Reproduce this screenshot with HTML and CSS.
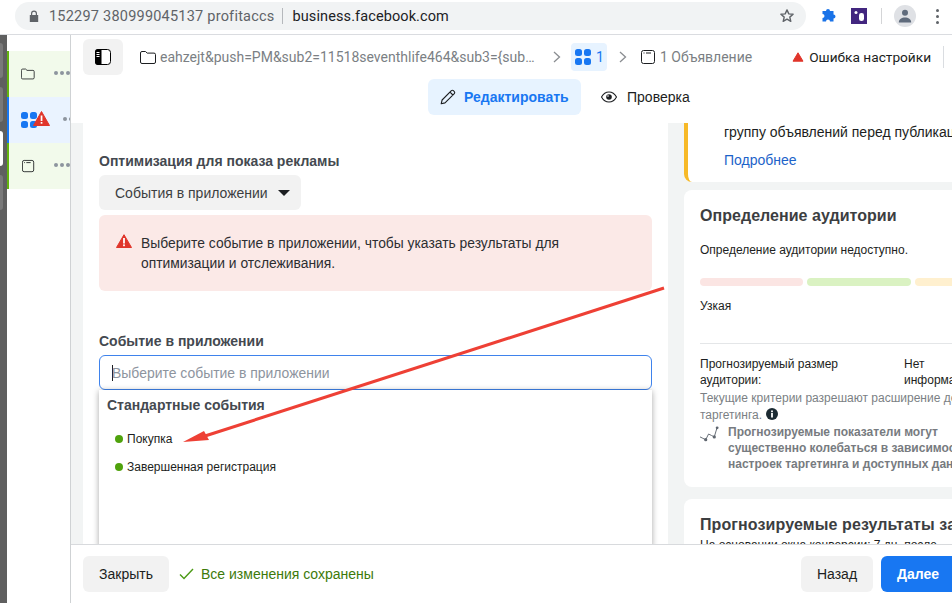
FILE: index.html
```html
<!DOCTYPE html>
<html lang="ru">
<head>
<meta charset="utf-8">
<title>Ads Manager</title>
<link rel="stylesheet" href="styles.css">
</head>
<body>
<div class="page">
  <header class="chrome">
    <div class="omnibox">
      <svg class="lock" width="10" height="12" viewBox="0 0 10 12"><path d="M2 5V3.500a3 3 0 0 1 6 0V5h1.200v7H.8V5zm1.200 0h3.600V3.500a1.800 1.800 0 0 0-3.600 0z" fill="#5f6368"/></svg>
      <span class="site-title">152297 380999045137 profitaccs</span>
      <span class="omni-sep"></span>
      <span class="site-host">business.facebook.com</span>
      <svg class="star" width="16" height="16" viewBox="0 0 16 16"><path d="M8 1.900l1.800 4 4.300.4-3.300 2.800 1 4.200L8 11.100l-3.800 2.200 1-4.200L1.900 6.300l4.300-.4z" fill="none" stroke="#5f6368" stroke-width="1.400" stroke-linejoin="round"/></svg>
    </div>
    <div class="extensions">
      <svg width="16" height="16" viewBox="0 0 16 16"><path d="M1 4.500h3.500a2 2 0 0 1 4 0H12V8a2 2 0 0 1 0 4v3H8.500a2 2 0 0 0-4 0H1v-3.500a2 2 0 0 0 0-4z" transform="translate(1.500 -1.500)" fill="#1a73e8"/></svg>
      <svg class="ext-purple" width="16" height="16" viewBox="0 0 16 16"><rect width="16" height="16" fill="#42267f"/><circle cx="5" cy="4.500" r="1.500" fill="#fff"/><rect x="8" y="5" width="5" height="8" rx="2.300" fill="#fff"/></svg>
      <span class="ext-sep"></span>
      <span class="avatar"><svg width="14" height="14" viewBox="0 0 14 14"><circle cx="7" cy="3.800" r="3" fill="#5f6b7c"/><path d="M.8 13.500c0-3.300 2.900-5 6.200-5s6.200 1.700 6.200 5z" fill="#5f6b7c"/></svg></span>
      <span class="kebab"><i></i><i></i><i></i></span>
    </div>
  </header>

  <div class="app">
    <div class="dock">
      <span class="dock-item"></span>
      <span class="dock-item"></span>
      <span class="dock-item dock-active"></span>
      <span class="dock-item"></span>
    </div>

    <nav class="tree">
      <div class="tree-row tree-ok">
        <svg width="17" height="14" viewBox="0 0 17 14"><path d="M.5 2.500A1.500 1.500 0 0 1 2 1h3.600l1.700 1.600H14.500A1.500 1.500 0 0 1 16 4.100v7.400a1.500 1.500 0 0 1-1.500 1.500H2A1.500 1.500 0 0 1 .5 11.500z" fill="none" stroke="#1c1e21" stroke-width="1"/></svg>
        <span class="dots dots-a"><i></i><i></i><i></i></span>
      </div>
      <div class="tree-row tree-current">
        <span class="grid-icon"><i></i><i></i><i></i><i></i></span>
        <svg class="warn-badge" width="17" height="15" viewBox="0 0 17 15"><path d="M8.500.5l8 14H.5z" fill="#e0352b" stroke="#e0352b" stroke-linejoin="round"/><rect x="7.700" y="4.500" width="1.700" height="5.500" fill="#fff"/><rect x="7.700" y="11" width="1.700" height="1.700" fill="#fff"/></svg>
        <span class="dots dots-b"><i></i><i></i><i></i></span>
      </div>
      <div class="tree-row tree-ok">
        <svg class="win-svg" width="15" height="15" viewBox="0 0 15 15"><rect x=".5" y=".5" width="13" height="13" rx="2" fill="none" stroke="#1c1e21"/><path d="M2.500 3h1M5 3h5" stroke="#1c1e21"/></svg>
        <span class="dots dots-a"><i></i><i></i><i></i></span>
      </div>
    </nav>

    <div class="editor">
      <div class="crumbs">
        <button class="panel-toggle">
          <svg width="16" height="16" viewBox="0 0 16 16"><rect x=".5" y=".5" width="15" height="15" rx="3" fill="#fff" stroke="#000"/><path d="M3 0h3.500v16H3a3 3 0 0 1-3-3V3a3 3 0 0 1 3-3z" fill="#000"/><path d="M1.500 3.500h3M1.500 5.500h3M1.500 7.500h3" stroke="#fff"/></svg>
        </button>
        <svg class="crumb-folder" width="16" height="13" viewBox="0 0 16 13"><path d="M.5 2A1.500 1.500 0 0 1 2 .5h3.500l1.700 1.600H14A1.500 1.500 0 0 1 15.500 3.600v7.400A1.500 1.500 0 0 1 14 12.500H2A1.500 1.500 0 0 1 .5 11z" fill="none" stroke="#1c1e21"/></svg>
        <span class="crumb-url">eahzejt&amp;push=PM&amp;sub2=11518seventhlife464&amp;sub3={sub…</span>
        <svg class="chev chev-a" width="8" height="12" viewBox="0 0 8 12"><path d="M1 1l5.500 5L1 11" fill="none" stroke="#8a8d91" stroke-width="1.300"/></svg>
        <span class="crumb-chip"><span class="grid-icon"><i></i><i></i><i></i><i></i></span>1</span>
        <svg class="chev chev-b" width="8" height="12" viewBox="0 0 8 12"><path d="M1 1l5.500 5L1 11" fill="none" stroke="#8a8d91" stroke-width="1.300"/></svg>
        <svg class="crumb-win" width="15" height="15" viewBox="0 0 15 15"><rect x=".5" y=".5" width="13" height="13" rx="2" fill="none" stroke="#1c1e21"/><path d="M2.500 3h1M5 3h5" stroke="#1c1e21"/></svg>
        <span class="crumb-ad">1 Объявление</span>
        <svg class="crumb-tri" width="12" height="10" viewBox="0 0 12 10"><path d="M6 .8l5 8.400H1z" fill="#e0352b" stroke="#e0352b" stroke-linejoin="round"/></svg>
        <span class="crumb-error">Ошибка настройки</span>
        <span class="crumb-sep"></span>
      </div>

      <div class="tabs">
        <button class="tab tab-active">
          <svg width="16" height="16" viewBox="0 0 16 16"><path d="M1.200 14.800l.9-3.800L11.400 1.700a1.400 1.400 0 0 1 2 0l.9.9a1.400 1.400 0 0 1 0 2L5 13.900z M10 3.100l2.900 2.900" fill="none" stroke="#1c1e21" stroke-width="1.100" stroke-linejoin="round"/></svg>
          Редактировать
        </button>
        <button class="tab">
          <svg width="16" height="12" viewBox="0 0 16 12"><path d="M.5 6C2.300 2.700 5 1 8 1s5.700 1.700 7.500 5C13.700 9.300 11 11 8 11S2.300 9.300.5 6z" fill="none" stroke="#1c1e21" stroke-width="1.100"/><circle cx="8" cy="6" r="2.800" fill="#1c1e21"/><circle cx="7" cy="5" r=".8" fill="#fff"/></svg>
          Проверка
        </button>
      </div>

      <div class="content">
        <main class="form-panel">
          <h3 class="field-label">Оптимизация для показа рекламы</h3>
          <button class="select">События в приложении <span class="caret"></span></button>
          <div class="alert">
            <svg width="16" height="14" viewBox="0 0 16 14"><path d="M8 .7l7.500 12.800H.5z" fill="#e0352b" stroke="#e0352b" stroke-linejoin="round"/><rect x="7.100" y="4" width="1.800" height="5.500" fill="#fff"/><rect x="7.100" y="10.400" width="1.800" height="1.800" fill="#fff"/></svg>
            <p>Выберите событие в приложении, чтобы указать результаты для оптимизации и отслеживания.</p>
          </div>
          <h3 class="field-label field-event">Событие в приложении</h3>
          <div class="input"><span class="cursor"></span>Выберите событие в приложении</div>
          <div class="dropdown">
            <h4>Стандартные события</h4>
            <div class="option"><span class="dot"></span>Покупка</div>
            <div class="option"><span class="dot"></span>Завершенная регистрация</div>
          </div>
        </main>

        <aside class="side">
          <section class="card card-warn">
            <p class="warn-text">группу объявлений перед публикацией.</p>
            <a class="link">Подробнее</a>
          </section>
          <section class="card card-audience">
            <h2>Определение аудитории</h2>
            <p class="aud-note">Определение аудитории недоступно.</p>
            <div class="meter"><span class="m-red"></span><span class="m-green"></span><span class="m-yellow"></span></div>
            <p class="meter-label">Узкая</p>
            <hr>
            <div class="estimate">
              <span class="est-label">Прогнозируемый размер аудитории:</span>
              <span class="est-value">Нет информации</span>
            </div>
            <p class="muted">Текущие критерии разрешают расширение детального таргетинга. <svg width="12" height="12" viewBox="0 0 12 12"><circle cx="6" cy="6" r="6" fill="#1c2b33"/><rect x="5.100" y="5" width="1.800" height="4.500" fill="#fff"/><rect x="5.100" y="2.500" width="1.800" height="1.700" fill="#fff"/></svg></p>
            <div class="forecast">
              <svg width="21" height="17" viewBox="0 0 21 17"><path d="M0 11l3 1.500 3 1.500 3-6 3 1.500 3 1.500 3-10" fill="none" stroke="#606770" stroke-width="1"/><circle cx="6" cy="14" r="1.700" fill="#606770"/><circle cx="15" cy="11" r="1.700" fill="#606770"/><circle cx="18" cy="1.500" r="1.500" fill="#606770"/></svg>
              <p>Прогнозируемые показатели могут существенно колебаться в зависимости от настроек таргетинга и доступных данных.</p>
            </div>
          </section>
          <section class="card card-results">
            <h2>Прогнозируемые результаты за день</h2>
            <p>На основании окна конверсии: 7 дн. после</p>
          </section>
        </aside>
      </div>

      <footer class="footer">
        <button class="btn">Закрыть</button>
        <svg class="check" width="15" height="12" viewBox="0 0 15 12"><path d="M1 6.500l4 4L14 1" fill="none" stroke="#4b9a15" stroke-width="1.400"/></svg>
        <span class="saved">Все изменения сохранены</span>
        <button class="btn btn-back">Назад</button>
        <button class="btn btn-next">Далее</button>
      </footer>
    </div>
  </div>

  <svg class="arrow" width="952" height="603" viewBox="0 0 952 603">
    <path d="M664 288L205 436" stroke="#ee4035" stroke-width="3" fill="none"/>
    <path d="M183 442l21-11 5 9z" fill="#ee4035"/>
  </svg>
</div>
</body>
</html>
```

FILE: styles.css
```css
* { box-sizing: border-box; }
html, body { margin: 0; padding: 0; }
body {
  width: 952px;
  height: 603px;
  overflow: hidden;
  background: #fff;
  color: #1c1e21;
  font-family: "Liberation Sans", Arial, sans-serif;
  font-size: 12px;
}
p, h2, h3, h4, hr { margin: 0; }
button { font: inherit; border: 0; padding: 0; color: inherit; }

.page { position: relative; width: 952px; height: 603px; overflow: hidden; display: flex; flex-direction: column; }

/* Browser bar */
.chrome {
  flex: none;
  height: 35px;
  display: flex;
  align-items: flex-start;
  border-bottom: 1px solid #dadce0;
  padding: 2px 0 0 15px;
}
.omnibox {
  width: 791px;
  height: 28px;
  border-radius: 14px;
  background: #f1f3f4;
  display: flex;
  align-items: center;
  padding: 0 11px 0 14px;
  font-size: 14.500px;
  font-family: Roboto, "Liberation Sans", sans-serif;
}
.lock { margin-right: 10px; }
.site-title { color: #5f6368; letter-spacing: .22px; }
.omni-sep { width: 1px; height: 16px; background: #b5b8bc; margin: 0 10px 0 7px; }
.site-host { color: #202124; flex: 1; letter-spacing: .1px; }
.extensions { display: flex; align-items: center; height: 28px; padding-left: 14px; }
.ext-purple { margin-left: 15px; }
.ext-sep { width: 1px; height: 16px; background: #d4d5d7; margin: 0 12px 0 14px; }
.avatar { width: 22px; height: 22px; border-radius: 50%; background: #dfe1e5; display: flex; align-items: center; justify-content: center; }
.kebab { display: flex; flex-direction: column; gap: 3px; margin-left: 20px; }
.kebab i { width: 3px; height: 3px; border-radius: 50%; background: #5f6368; }

/* App shell */
.app { flex: 1; min-height: 0; display: flex; }
.dock {
  flex: none;
  width: 7px;
  background: #5f5f5f;
  display: flex;
  flex-direction: column;
  gap: 9px;
  padding-top: 8px;
}
.dock-item { width: 3px; height: 35px; background: #797979; border-radius: 0 3px 3px 0; }
.dock-active { background: #fff; }

.tree { flex: none; width: 64px; border-right: 1px solid #cfd2d4; padding-top: 16px; overflow: hidden; }
.tree-row {
  height: 46px;
  display: flex;
  align-items: center;
  position: relative;
  padding-left: 12px;
  border-left: 2px solid #63b30f;
  background: #f2faeb;
}
.tree-current { border-left-color: #1877f2; background: #eaf3ff; }
.tree-row .win-svg { margin-left: 1px; }
.dots { display: flex; gap: 2px; flex: none; margin-bottom: 3px; }
.dots i { width: 4px; height: 4px; border-radius: 50%; background: #8d949e; flex: none; }
.dots-a { margin-left: 19px; }
.dots-b { margin-left: 26px; }
.warn-badge { position: absolute; left: 24px; top: 14px; }

.grid-icon { display: grid; grid-template-columns: 7px 7px; gap: 2px; flex: none; }
.grid-icon i { width: 7px; height: 7px; border-radius: 2.500px; background: #1877f2; }

/* Editor */
.editor { flex: 1; min-width: 0; display: flex; flex-direction: column; }
.crumbs { flex: none; height: 44px; display: flex; align-items: center; padding: 0 0 0 12px; font-size: 14px; white-space: nowrap; font-family: Roboto, "Liberation Sans", sans-serif; }
.panel-toggle { width: 40px; height: 36px; border-radius: 6px; background: #f2f2f2; display: flex; align-items: center; justify-content: center; }
.crumb-folder { margin-left: 17px; margin-top: 1px; }
.crumb-url { margin-left: 4px; color: #7b7f84; flex: none; width: 376px; }
.chev-a { margin-left: 17px; }
.crumb-chip { margin-left: 10px; width: 36px; height: 28px; border-radius: 4px; background: #e7f3ff; color: #1877f2; display: flex; align-items: center; gap: 5px; padding-left: 4px; }
.chev-b { margin-left: 12px; }
.crumb-win { margin-left: 14px; }
.crumb-ad { margin-left: 4px; color: #7b7f84; }
.crumb-tri { margin-left: 40px; }
.crumb-error { margin-left: 5px; color: #1c1e21; font-size: 13.700px; }
.crumb-sep { width: 1px; height: 22px; background: #dadde1; margin-left: 12px; }

.tabs { flex: none; height: 44px; display: flex; align-items: flex-start; justify-content: flex-start; padding-left: 357px; font-size: 14px; }
.tab { display: flex; align-items: center; gap: 10px; height: 36px; background: none; padding: 0 12px; border-radius: 6px; }
.tab-active { width: 153px; background: #e7f3ff; color: #1877f2; font-weight: 700; gap: 8px; }
.tab + .tab { margin-left: 8px; }

.content { flex: 1; min-height: 0; display: flex; background: #f2f4f4; padding-left: 12px; overflow: hidden; }

.form-panel { flex: none; width: 585px; background: #fff; padding: 31px 16px 0; overflow: hidden; }
.field-label { font-size: 14px; font-weight: 700; color: #444950; line-height: 14px; }
.select { display: flex; align-items: center; width: 202px; height: 35px; margin-top: 7px; padding-left: 16px; background: #f2f2f2; border-radius: 6px; font-size: 14px; color: #3c3e41; }
.caret { width: 0; height: 0; margin-left: 10px; border: 6px solid transparent; border-top: 6px solid #1c1e21; border-bottom: 0; }
.alert { display: flex; gap: 9px; width: 553px; height: 76px; margin-top: 5px; padding: 18px 17px 0; background: #fbe9e7; border-radius: 6px; font-size: 13.850px; line-height: 20px; color: #2c2e31; }
.alert svg { flex: none; margin-top: 1px; }
.alert p { width: 460px; }
.field-event { margin-top: 43px; }
.input { display: flex; align-items: center; width: 553px; height: 35px; margin-top: 7px; padding-left: 12px; border: 1px solid #3f83ec; border-radius: 6px; font-size: 13.950px; color: #8d949e; background: #fff; }
.cursor { width: 1px; height: 16px; background: #1c1e21; margin-right: -1px; }
.dropdown { width: 553px; height: 160px; padding: 7px 8px 0; background: #fff; border-radius: 0 0 4px 4px; box-shadow: 0 1px 6px rgba(0,0,0,.35); }
.dropdown h4 { font-size: 14px; font-weight: 700; color: #444950; line-height: 16px; }
.option { display: flex; align-items: center; height: 28px; padding-left: 8px; font-size: 12px; color: #1c1e21; }
.dropdown h4 + .option { margin-top: 12px; }
.dot { width: 8px; height: 8px; border-radius: 50%; background: #4fa20c; margin-right: 4px; }

.side { flex: none; width: 268px; margin-left: 16px; display: flex; flex-direction: column; overflow: hidden; }
.card { flex: none; width: 340px; background: #fff; border-radius: 8px; padding: 0 16px; }
.card-warn { height: 59px; border-left: 4px solid #f7b928; border-radius: 0 0 0 8px; padding: 0 0 0 36px; font-size: 14px; white-space: nowrap; }
.warn-text { line-height: 18px; }
.link { display: block; margin-top: 11px; color: #1d63c9; line-height: 16px; }
.card-audience { height: 297px; margin-top: 8px; padding-top: 16px; }
.card h2 { font-size: 16px; font-weight: 700; color: #3c3e41; line-height: 20px; white-space: nowrap; letter-spacing: .04px; }
.aud-note { margin-top: 16px; line-height: 16px; white-space: nowrap; }
.meter { display: flex; gap: 4px; margin-top: 20px; }
.meter span { height: 8px; border-radius: 4px; flex: none; width: 103px; }
.meter .m-green { background: #daf2c2; width: 104px; }
.m-red { background: #fbe5e3; }
.m-yellow { background: #fff0cf; }
.meter-label { margin-top: 12px; line-height: 16px; }
.card hr { border: 0; border-top: 1px solid #e4e6e8; margin-top: 29px; }
.estimate { display: flex; margin-top: 12px; line-height: 16px; }
.est-label { flex: none; width: 204px; padding-right: 50px; }
.est-value { flex: none; width: 80px; }
.muted { margin-top: 2px; line-height: 17px; color: #7b7f84; width: 308px; }
.muted svg { vertical-align: -1px; margin-left: 1px; }
.forecast { display: flex; gap: 8px; margin-top: 0; }
.forecast svg { flex: none; margin-top: 2px; width: 20px; }
.forecast p { flex: none; width: 272px; font-weight: 700; color: #777b80; line-height: 16px; }
.card-results { height: 60px; margin-top: 12px; padding-top: 16px; border-radius: 8px 8px 0 0; overflow: hidden; }
.card-results h2 { letter-spacing: .1px; }
.card-results p { margin-top: 2px; line-height: 16px; white-space: nowrap; }

/* Footer */
.footer { flex: none; height: 59px; display: flex; align-items: center; border-top: 1px solid #d8dadd; padding: 0 0 0 12px; background: #fff; font-size: 14px; overflow: hidden; position: relative; }
.btn { height: 36px; border-radius: 6px; background: #f2f2f2; color: #1c1e21; flex: none; }
.footer .btn:first-child { width: 86px; }
.check { margin-left: 10px; flex: none; }
.saved { margin-left: 7px; color: #3d7a0a; flex: none; }
.btn-back { width: 72px; margin-left: auto; }
.btn-next { width: 82px; margin-left: 8px; margin-right: -11px; background: #1877f2; color: #fff; font-weight: 700; padding-right: 8px; }

.arrow { position: absolute; left: 0; top: 0; pointer-events: none; }
```
